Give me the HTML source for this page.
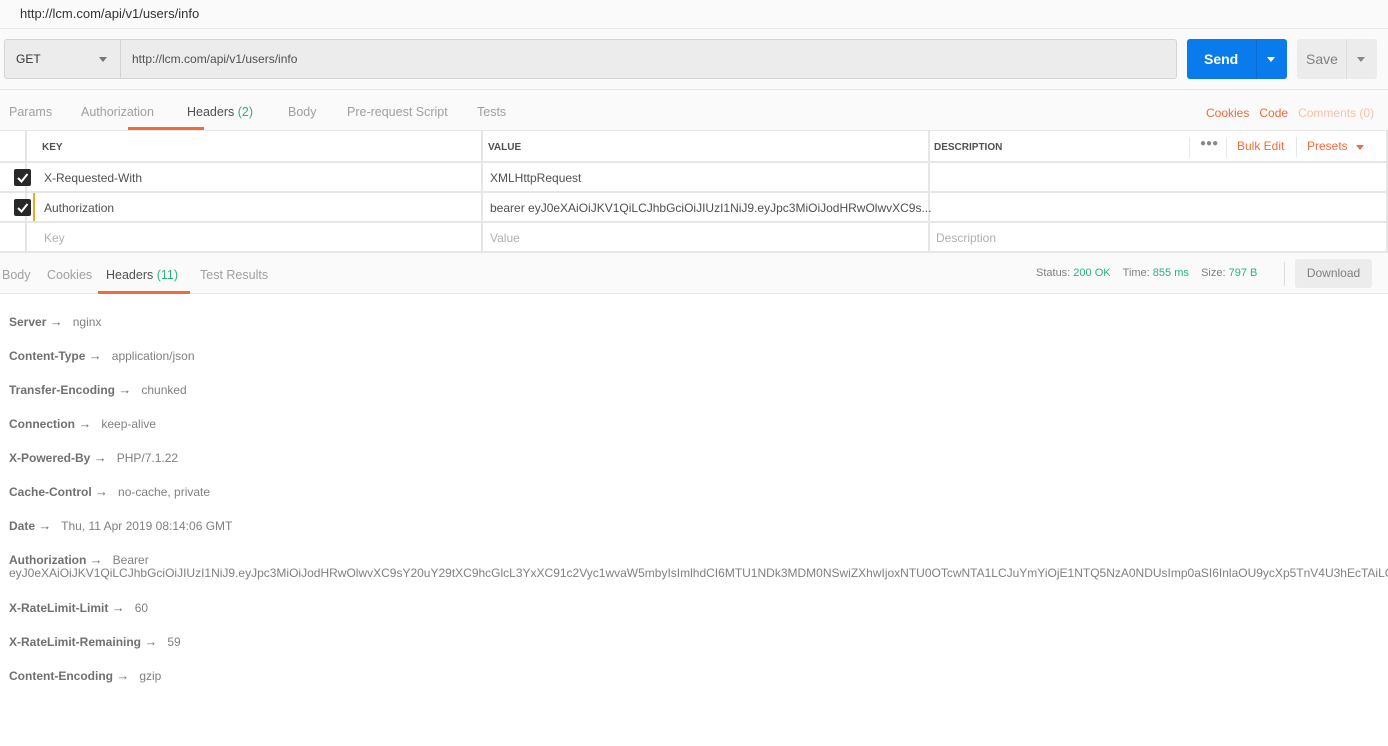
<!DOCTYPE html>
<html><head><style>
*{box-sizing:border-box;margin:0;padding:0}
body{width:1388px;height:746px;background:#fff;font-family:"Liberation Sans",sans-serif;position:relative;overflow:hidden;color:#505050}
.a{position:absolute;white-space:nowrap}
.tab{font-size:12.5px;color:#a0a0a0}
.g{color:#26b47f}
.o{color:#f26b3a}
.row{position:absolute;left:0;width:1388px;border-bottom:2px solid #e6e6e6;background:#fff}
.cb{position:absolute;left:14px;width:17px;height:17px;background:#282828;border-radius:2px}
.hd{font-size:12px;color:#808080}
.hd b{color:#707070}
.ar{font-size:13px;color:#707070;vertical-align:0px}
</style></head><body>
<div class="a" style="left:0;top:0;width:1388px;height:29px;background:#fafafa;border-bottom:1px solid #e8e8e8"></div>
<div class="a" style="left:20px;top:6px;font-size:13px;color:#333">http://lcm.com/api/v1/users/info</div>
<div class="a" style="left:0;top:29px;width:1388px;height:61px;background:#fafafa;border-bottom:1px solid #e6e6e6"></div>
<div class="a" style="left:4px;top:39px;width:1173px;height:40px;background:#ececec;border:1px solid #d4d4d4;border-radius:3px"></div>
<div class="a" style="left:120px;top:40px;width:1px;height:38px;background:#d4d4d4"></div>
<div class="a" style="left:16px;top:52px;font-size:12px;color:#333">GET</div>
<div class="a" style="left:99px;top:57px;border-left:4px solid transparent;border-right:4px solid transparent;border-top:5px solid #777"></div>
<div class="a" style="left:132px;top:52px;font-size:12px;color:#505050">http://lcm.com/api/v1/users/info</div>
<div class="a" style="left:1187px;top:39px;width:100px;height:40px;background:#097bed;border-radius:3px"></div>
<div class="a" style="left:1256px;top:39px;width:1px;height:40px;background:#0a6cd0"></div>
<div class="a" style="left:1204px;top:51px;font-size:14px;font-weight:bold;color:#fff">Send</div>
<div class="a" style="left:1267px;top:57px;border-left:4px solid transparent;border-right:4px solid transparent;border-top:5px solid #fff"></div>
<div class="a" style="left:1297px;top:39px;width:80px;height:40px;background:#ececec;border-radius:3px"></div>
<div class="a" style="left:1346px;top:39px;width:1px;height:40px;background:#ddd"></div>
<div class="a" style="left:1306px;top:51px;font-size:14px;color:#808080">Save</div>
<div class="a" style="left:1357px;top:57px;border-left:4px solid transparent;border-right:4px solid transparent;border-top:5px solid #888"></div>
<div class="a" style="left:0;top:90px;width:1388px;height:41px;background:#fafafa"></div>
<div class="a tab" style="left:9px;top:105px">Params</div>
<div class="a tab" style="left:81px;top:105px">Authorization</div>
<div class="a tab" style="left:187px;top:105px;color:#505050">Headers <span class="g">(2)</span></div>
<div class="a" style="left:128px;top:127px;width:76px;height:3px;background:#f26b3a"></div>
<div class="a tab" style="left:288px;top:105px">Body</div>
<div class="a tab" style="left:347px;top:105px">Pre-request Script</div>
<div class="a tab" style="left:477px;top:105px">Tests</div>
<div class="a" style="left:1206px;top:106px;font-size:12px"><span class="o">Cookies</span>&nbsp;&nbsp;&nbsp;<span class="o">Code</span>&nbsp;&nbsp;&nbsp;<span style="color:#f8c1a8">Comments (0)</span></div>
<div class="row" style="top:130px;height:33px;border-top:1px solid #e6e6e6"></div>
<div class="row" style="top:163px;height:30px"></div>
<div class="row" style="top:193px;height:30px"></div>
<div class="row" style="top:223px;height:30px"></div>
<div class="a" style="left:25px;top:131px;width:2px;height:122px;background:#e6e6e6"></div>
<div class="a" style="left:481px;top:131px;width:2px;height:122px;background:#e6e6e6"></div>
<div class="a" style="left:928px;top:131px;width:2px;height:122px;background:#e6e6e6"></div>
<div class="a" style="left:1386px;top:131px;width:2px;height:122px;background:#e6e6e6"></div>
<div class="a" style="left:33px;top:193px;width:2px;height:28px;background:#f5a623"></div>
<div class="a" style="left:42px;top:142px;font-size:10px;font-weight:bold;color:#505050">KEY</div>
<div class="a" style="left:488px;top:142px;font-size:10px;font-weight:bold;color:#505050">VALUE</div>
<div class="a" style="left:934px;top:142px;font-size:10px;font-weight:bold;color:#505050">DESCRIPTION</div>
<div class="a" style="left:1189px;top:137px;width:1px;height:20px;background:#e6e6e6"></div>
<div class="a" style="left:1226px;top:137px;width:1px;height:20px;background:#e6e6e6"></div>
<div class="a" style="left:1296px;top:137px;width:1px;height:20px;background:#e6e6e6"></div>
<div class="a" style="left:1200px;top:138px;font-size:10px;color:#888;letter-spacing:0px">●●●</div>
<div class="a o" style="left:1237px;top:139px;font-size:12px">Bulk Edit</div>
<div class="a o" style="left:1307px;top:139px;font-size:12px">Presets</div>
<div class="a" style="left:1356px;top:145px;border-left:4px solid transparent;border-right:4px solid transparent;border-top:5px solid #f26b3a"></div>
<div class="cb" style="top:169px"><svg width="17" height="17"><path d="M4 9 L7.5 12.5 L13.5 5" stroke="#fff" stroke-width="2" fill="none"/></svg></div>
<div class="cb" style="top:199px"><svg width="17" height="17"><path d="M4 9 L7.5 12.5 L13.5 5" stroke="#fff" stroke-width="2" fill="none"/></svg></div>
<div class="a" style="left:44px;top:171px;font-size:12px">X-Requested-With</div>
<div class="a" style="left:490px;top:171px;font-size:12px">XMLHttpRequest</div>
<div class="a" style="left:44px;top:201px;font-size:12px">Authorization</div>
<div class="a" style="left:490px;top:201px;font-size:12px">bearer eyJ0eXAiOiJKV1QiLCJhbGciOiJIUzI1NiJ9.eyJpc3MiOiJodHRwOlwvXC9s...</div>
<div class="a" style="left:44px;top:231px;font-size:12px;color:#b0b0b0">Key</div>
<div class="a" style="left:490px;top:231px;font-size:12px;color:#b0b0b0">Value</div>
<div class="a" style="left:936px;top:231px;font-size:12px;color:#b0b0b0">Description</div>
<div class="a" style="left:0;top:253px;width:1388px;height:41px;background:#fafafa;border-bottom:1px solid #e6e6e6"></div>
<div class="a tab" style="left:2px;top:268px">Body</div>
<div class="a tab" style="left:47px;top:268px">Cookies</div>
<div class="a tab" style="left:106px;top:268px;color:#505050">Headers <span class="g">(11)</span></div>
<div class="a" style="left:98px;top:291px;width:92px;height:3px;background:#f26b3a"></div>
<div class="a tab" style="left:200px;top:268px">Test Results</div>
<div class="a" style="left:1036px;top:267px;font-size:11px;color:#808080">Status: <span class="g">200 OK</span>&nbsp;&nbsp;&nbsp; Time: <span class="g">855 ms</span>&nbsp;&nbsp;&nbsp; Size: <span class="g">797 B</span></div>
<div class="a" style="left:1284px;top:262px;width:1px;height:24px;background:#ddd"></div>
<div class="a" style="left:1295px;top:259px;width:77px;height:29px;background:#ececec;border-radius:3px;font-size:12px;color:#808080;text-align:center;line-height:29px">Download</div>
<div class="a hd" style="left:9px;top:314px"><b>Server</b> <span class="ar">→</span>&nbsp;&nbsp; nginx</div>
<div class="a hd" style="left:9px;top:348px"><b>Content-Type</b> <span class="ar">→</span>&nbsp;&nbsp; application/json</div>
<div class="a hd" style="left:9px;top:382px"><b>Transfer-Encoding</b> <span class="ar">→</span>&nbsp;&nbsp; chunked</div>
<div class="a hd" style="left:9px;top:416px"><b>Connection</b> <span class="ar">→</span>&nbsp;&nbsp; keep-alive</div>
<div class="a hd" style="left:9px;top:450px"><b>X-Powered-By</b> <span class="ar">→</span>&nbsp;&nbsp; PHP/7.1.22</div>
<div class="a hd" style="left:9px;top:484px"><b>Cache-Control</b> <span class="ar">→</span>&nbsp;&nbsp; no-cache, private</div>
<div class="a hd" style="left:9px;top:518px"><b>Date</b> <span class="ar">→</span>&nbsp;&nbsp; Thu, 11 Apr 2019 08:14:06 GMT</div>
<div class="a hd" style="left:9px;top:552px"><b>Authorization</b> <span class="ar">→</span>&nbsp;&nbsp; Bearer</div>
<div class="a hd" style="left:9px;top:566px">eyJ0eXAiOiJKV1QiLCJhbGciOiJIUzI1NiJ9.eyJpc3MiOiJodHRwOlwvXC9sY20uY29tXC9hcGlcL3YxXC91c2Vyc1wvaW5mbyIsImlhdCI6MTU1NDk3MDM0NSwiZXhwIjoxNTU0OTcwNTA1LCJuYmYiOjE1NTQ5NzA0NDUsImp0aSI6InlaOU9ycXp5TnV4U3hEcTAiLCJzdWIiOjF9</div>
<div class="a hd" style="left:9px;top:600px"><b>X-RateLimit-Limit</b> <span class="ar">→</span>&nbsp;&nbsp; 60</div>
<div class="a hd" style="left:9px;top:634px"><b>X-RateLimit-Remaining</b> <span class="ar">→</span>&nbsp;&nbsp; 59</div>
<div class="a hd" style="left:9px;top:668px"><b>Content-Encoding</b> <span class="ar">→</span>&nbsp;&nbsp; gzip</div>
</body></html>
